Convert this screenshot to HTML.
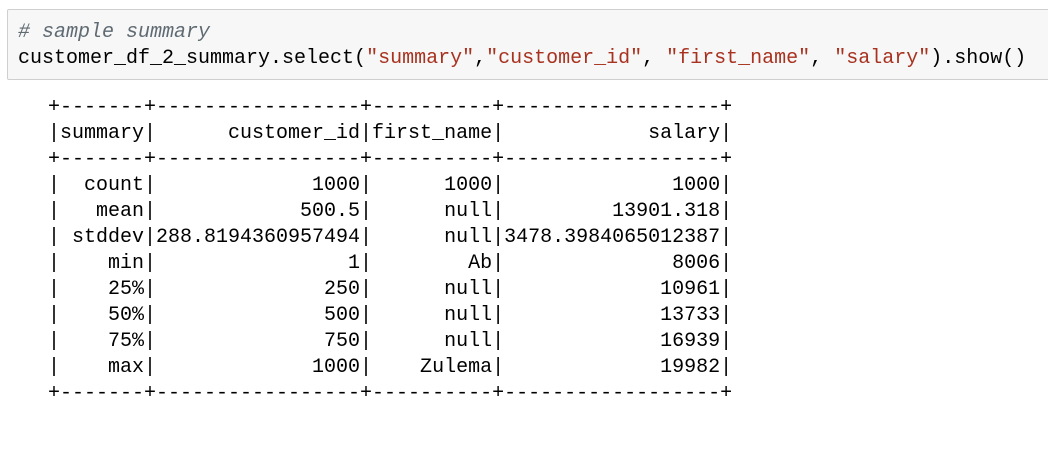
<!DOCTYPE html>
<html><head><style>
body{margin:0;background:#fff;width:1048px;height:452px;overflow:hidden;position:relative;font-family:"Liberation Mono",monospace;}
.in{position:absolute;left:7px;top:9px;width:1050px;height:71px;background:#f7f7f7;border:1px solid #cfcfcf;border-radius:2px;box-sizing:border-box;}
pre{margin:0;font-family:"Liberation Mono",monospace;font-size:20px;line-height:26px;color:#000;}
.in pre{position:absolute;left:10px;top:10px;}
.c{color:#5f6a72;font-style:italic}
.s{color:#a8321f}
.out{position:absolute;left:48px;top:95px;}
</style></head><body>
<div class="in"><pre><span class="c"># sample summary</span>
customer_df_2_summary.select(<span class="s">"summary"</span>,<span class="s">"customer_id"</span>, <span class="s">"first_name"</span>, <span class="s">"salary"</span>).show()</pre></div>
<pre class="out">+-------+-----------------+----------+------------------+
|summary|      customer_id|first_name|            salary|
+-------+-----------------+----------+------------------+
|  count|             1000|      1000|              1000|
|   mean|            500.5|      null|         13901.318|
| stddev|288.8194360957494|      null|3478.3984065012387|
|    min|                1|        Ab|              8006|
|    25%|              250|      null|             10961|
|    50%|              500|      null|             13733|
|    75%|              750|      null|             16939|
|    max|             1000|    Zulema|             19982|
+-------+-----------------+----------+------------------+</pre>
</body></html>
